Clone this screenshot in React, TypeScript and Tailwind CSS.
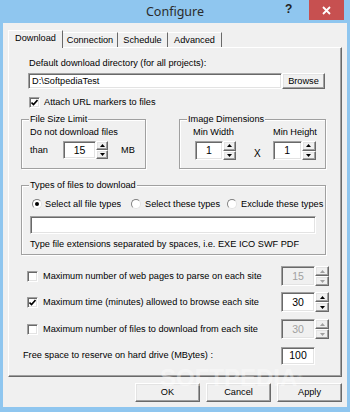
import React from "react";

const sunken =
  "border border-t-[#a0a0a0] border-l-[#a0a0a0] border-r-white border-b-white shadow-[inset_1px_1px_0_#696969,inset_-1px_-1px_0_#e3e3e3]";
const raised =
  "border border-t-white border-l-white border-r-[#696969] border-b-[#696969] shadow-[inset_-1px_-1px_0_#a0a0a0,inset_1px_1px_0_#e3e3e3]";

function Arrow({ up, disabled }: { up?: boolean; disabled?: boolean }) {
  return (
    <svg width="5" height="3" viewBox="0 0 5 3">
      <polygon
        points={up ? "2.5,0 5,3 0,3" : "0,0 5,0 2.5,3"}
        fill={disabled ? "#a0a0a0" : "#000"}
      />
    </svg>
  );
}

function Spin({ className, disabled }: { className: string; disabled?: boolean }) {
  return (
    <div className={`flex flex-col ${className}`}>
      <div className={`${raised} flex flex-1 items-center justify-center bg-[#f0f0f0]`}>
        <Arrow up disabled={disabled} />
      </div>
      <div className={`${raised} flex flex-1 items-center justify-center bg-[#f0f0f0]`}>
        <Arrow disabled={disabled} />
      </div>
    </div>
  );
}

function Check({ checked }: { checked?: boolean }) {
  return (
    <div className={`${sunken} flex h-[11px] w-[11px] shrink-0 items-center justify-center bg-white`}>
      {checked && (
        <svg width="7" height="7" viewBox="0 0 7 7">
          <path d="M0.5 3.5 L2.5 5.5 L6.5 1" stroke="#000" strokeWidth="1.6" fill="none" />
        </svg>
      )}
    </div>
  );
}

function Radio({ checked }: { checked?: boolean }) {
  return (
    <div className="flex h-[10px] w-[10px] shrink-0 items-center justify-center rounded-full border border-t-[#808080] border-l-[#808080] border-r-[#e3e3e3] border-b-[#e3e3e3] bg-white">
      {checked && <div className="h-[4px] w-[4px] rounded-full bg-black" />}
    </div>
  );
}

function Group({ label, className, children }: { label: string; className: string; children: React.ReactNode }) {
  return (
    <div className={`relative border border-[#a0a0a0] shadow-[inset_1px_1px_0_#fff,1px_1px_0_#fff] ${className}`}>
      <span className="absolute -top-[6px] left-[7px] bg-[#f0f0f0] px-[1px] leading-[11px]">{label}</span>
      {children}
    </div>
  );
}

function LimitRow({ label, value, checked, disabled, className }: { label: string; value: string; checked?: boolean; disabled?: boolean; className: string }) {
  return (
    <div className={`ml-[18px] flex h-[20px] w-[302px] items-center ${className}`}>
      <Check checked={checked} />
      <span className="ml-[5px]">{label}</span>
      <div
        className={`${sunken} ml-auto flex h-[20px] w-[34px] items-center justify-center text-[10.5px] ${
          disabled ? "bg-[#f0f0f0] text-[#a0a0a0]" : "bg-white"
        }`}
      >
        {value}
      </div>
      <Spin className="h-[20px] w-[14px]" disabled={disabled} />
    </div>
  );
}

export default function App() {
  return (
    <div className="relative flex h-[412px] w-[350px] flex-col overflow-hidden bg-[#8fc6ef] font-['Liberation_Sans',Arial,sans-serif] text-[9.2px] leading-[11px] text-black">
      {/* title bar */}
      <div className="flex h-[23px] shrink-0 items-start">
        <div className="flex-1 pl-[65px] pt-[3px] text-center font-['Noto_Sans',sans-serif] text-[12.5px] leading-[17px] text-[#2b2b2b]">
          Configure
        </div>
        <div className="w-[24px] pt-[2px] font-['Liberation_Sans',Arial,sans-serif] text-[12px] font-bold leading-[15px] text-[#222]">?</div>
        <div className="mr-[6px] flex h-[20px] w-[35px] items-center justify-center bg-[#c75050]">
          <svg width="9" height="9" viewBox="0 0 9 9">
            <path d="M1 1 L8 8 M8 1 L1 8" stroke="#fff" strokeWidth="1.8" />
          </svg>
        </div>
      </div>

      {/* client area */}
      <div className="mx-[3px] mb-[5px] flex flex-1 flex-col bg-[#f0f0f0] px-[5px] pt-[7px]">
        <div className="flex h-[17px] items-end">
          <div className="relative z-10 -mb-[1px] flex h-[18px] w-[55px] items-start justify-center border-l border-t border-r border-l-white border-t-white border-r-[#696969] bg-[#f0f0f0] pt-[2px]">
            Download
          </div>
          {["Connection", "Schedule", "Advanced"].map((t, i) => (
            <div
              key={t}
              className={`flex h-[15px] items-start justify-center border-t border-r border-t-white border-r-[#696969] pt-[2px] ${
                i === 0 ? "w-[55px]" : i === 1 ? "w-[50px]" : "w-[54px]"
              }`}
            >
              {t}
            </div>
          ))}
        </div>

        <div className="flex h-[330px] flex-col border border-t-white border-l-white border-r-[#696969] border-b-[#696969] shadow-[inset_-1px_-1px_0_#a0a0a0]">
          <div className="ml-[20px] mt-[10px]">Default download directory (for all projects):</div>
          <div className="ml-[19px] mt-[4px] flex h-[16px]">
            <div className={`${sunken} flex w-[254px] items-center bg-white pl-[3px]`}>D:\SoftpediaTest</div>
            <div className={`${raised} flex w-[43px] items-center justify-center bg-[#f0f0f0]`}>Browse</div>
          </div>
          <div className="ml-[20px] mt-[7px] flex h-[12px] items-center">
            <Check checked />
            <span className="ml-[4px]">Attach URL markers to files</span>
          </div>

          <div className="ml-[12px] mt-[11px] flex">
            <Group label="File Size Limit" className="h-[50px] w-[125px]">
              <div className="ml-[8px] mt-[7px]">Do not download files</div>
              <div className="ml-[8px] mt-[3px] flex h-[18px] items-center">
                <span className="w-[33px]">than</span>
                <div className={`${sunken} flex h-[18px] w-[33px] items-center justify-center bg-white text-[10.5px]`}>15</div>
                <Spin className="h-[18px] w-[12px]" />
                <span className="ml-[13px]">MB</span>
              </div>
            </Group>
            <Group label="Image Dimensions" className="ml-[33px] h-[50px] w-[147px]">
              <div className="mt-[7px] flex">
                <span className="ml-[13px] w-[80px]">Min Width</span>
                <span>Min Height</span>
              </div>
              <div className="mt-[3px] flex h-[19px]">
                <div className={`${sunken} ml-[15px] flex w-[28px] items-center justify-center bg-white text-[10.5px]`}>1</div>
                <Spin className="w-[13px]" />
                <span className="ml-[18px] mr-[12px] self-end text-[10px] leading-[12px]">X</span>
                <div className={`${sunken} flex w-[29px] items-center justify-center bg-white text-[10.5px]`}>1</div>
                <Spin className="w-[14px]" />
              </div>
            </Group>
          </div>

          <Group label="Types of files to download" className="ml-[12px] mt-[16px] h-[70px] w-[305px]">
            <div className="mt-[12px] flex h-[12px] items-center whitespace-nowrap">
              <div className="ml-[10px] flex w-[99px] items-center">
                <Radio checked />
                <span className="ml-[3px] w-[76px] overflow-hidden">Select all file types</span>
              </div>
              <div className="flex w-[96px] items-center">
                <Radio />
                <span className="ml-[4px]">Select these types</span>
              </div>
              <div className="flex items-center">
                <Radio />
                <span className="ml-[4px]">Exclude these types</span>
              </div>
            </div>
            <div className={`${sunken} ml-[8px] mt-[6px] h-[18px] w-[286px] bg-white`} />
            <div className="ml-[8px] mt-[5px]">Type file extensions separated by spaces, i.e. EXE ICO SWF PDF</div>
          </Group>

          <LimitRow className="mt-[11px]" label="Maximum number of web pages to parse on each site" value="15" disabled />
          <LimitRow className="mt-[6px]" label="Maximum time (minutes) allowed to browse each site" value="30" checked />
          <LimitRow className="mt-[7px]" label="Maximum number of files to download from each site" value="30" disabled />

          <div className="ml-[14px] mt-[7px] flex h-[19px] w-[292px] items-center">
            <span>Free space to reserve on hard drive (MBytes) :</span>
            <div className={`${sunken} ml-auto flex h-[18px] w-[34px] items-center justify-center bg-white text-[10.5px]`}>100</div>
          </div>
        </div>

        <div className="mt-[6px] flex justify-end gap-[6px]">
          {["OK", "Cancel", "Apply"].map((b) => (
            <div key={b} className={`${raised} flex h-[19px] w-[65px] items-center justify-center bg-[#f0f0f0]`}>
              {b}
            </div>
          ))}
        </div>
      </div>

      {/* watermark */}
      <div className="pointer-events-none absolute left-[160px] top-[364px] font-['Liberation_Sans',Arial,sans-serif] text-[24px] font-bold leading-[28px] text-white/40">
        SOFTPEDIA<span className="align-top text-[7px]">®</span>
      </div>
    </div>
  );
}
